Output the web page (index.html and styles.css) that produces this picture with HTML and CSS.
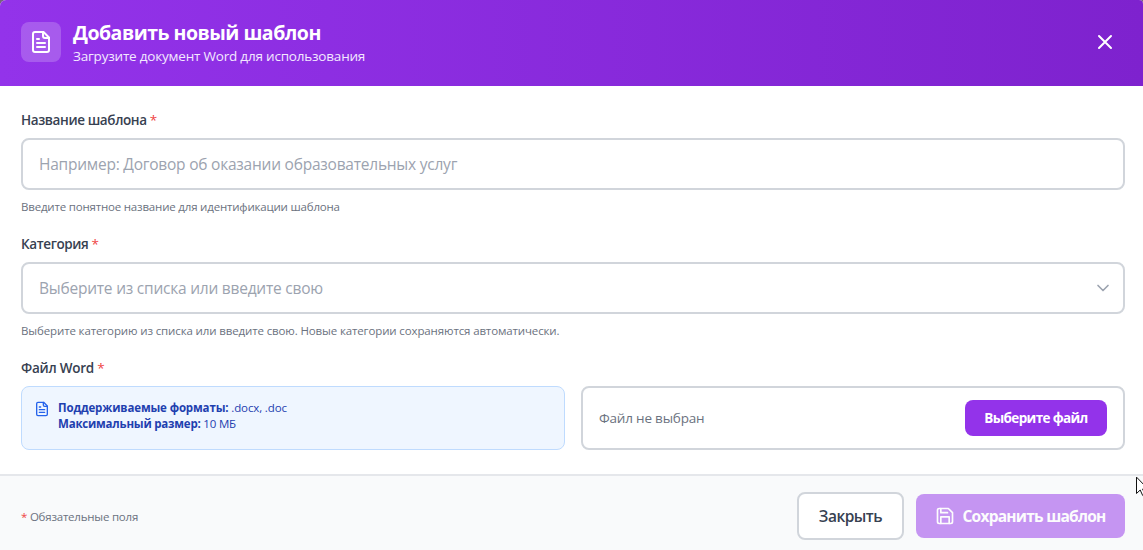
FILE: index.html
```html
<!DOCTYPE html>
<html lang="ru">
<head>
    <meta charset="UTF-8">
    <meta name="viewport" content="width=device-width, initial-scale=1.0">
    <title>Добавить новый шаблон</title>

    <link rel="stylesheet" href="styles.css">
</head>
<body>

<div class="modal">
    <header class="modal-header">
        <div class="header-icon">
            <svg width="24" height="24" viewBox="0 0 24 24">
                <path d="M14.5 2H6a2 2 0 0 0-2 2v16a2 2 0 0 0 2 2h12a2 2 0 0 0 2-2V7.5z"/>
                <path d="M14 2v4a2 2 0 0 0 2 2h4M10 9H8M16 13H8M16 17H8"/>
            </svg>
        </div>
        <div class="header-text">
            <h1>Добавить новый шаблон</h1>
            <p>Загрузите документ Word для использования</p>
        </div>
        <button class="close-icon" type="button" aria-label="Закрыть">
            <svg width="24" height="24" viewBox="0 0 24 24"><path d="M6 18L18 6M6 6l12 12"/></svg>
        </button>
    </header>

    <form class="modal-body">
        <div class="field">
            <label for="name">Название шаблона <span class="required">*</span></label>
            <input id="name" type="text" placeholder="Например: Договор об оказании образовательных услуг">
            <p class="hint">Введите понятное название для идентификации шаблона</p>
        </div>

        <div class="field">
            <label for="category">Категория <span class="required">*</span></label>
            <div class="combo">
                <input id="category" type="text" placeholder="Выберите из списка или введите свою">
                <svg class="chevron" width="20" height="20" viewBox="0 0 24 24"><path d="M6 9l6 6 6-6"/></svg>
            </div>
            <p class="hint hint-category">Выберите категорию из списка или введите свою. Новые категории сохраняются автоматически.</p>
        </div>

        <div class="field">
            <label for="file-btn" class="label-file">Файл Word <span class="required">*</span></label>
            <div class="file-row">
                <div class="info-box">
                    <svg width="16" height="16" viewBox="0 0 24 24">
                        <path d="M14.5 2H6a2 2 0 0 0-2 2v16a2 2 0 0 0 2 2h12a2 2 0 0 0 2-2V7.5z"/>
                        <path d="M14 2v4a2 2 0 0 0 2 2h4M10 9H8M16 13H8M16 17H8"/>
                    </svg>
                    <div class="info-text">
                        <p><strong>Поддерживаемые форматы:</strong> .docx, .doc</p>
                        <p class="max-size"><strong>Максимальный размер:</strong> 10 МБ</p>
                    </div>
                </div>
                <div class="file-picker">
                    <span class="file-name">Файл не выбран</span>
                    <button id="file-btn" class="file-btn" type="button">Выберите файл</button>
                </div>
            </div>
        </div>
    </form>

    <footer class="modal-footer">
        <p class="note"><span class="required">*</span> Обязательные поля</p>
        <button class="btn-close" type="button">Закрыть</button>
        <button class="btn-save" type="button" disabled>
            <svg width="20" height="20" viewBox="0 0 24 24">
                <path d="M16 3H5a2 2 0 0 0-2 2v14a2 2 0 0 0 2 2h14a2 2 0 0 0 2-2V8z"/>
                <path d="M7 3v5h8M7 21v-8h10v8"/>
            </svg>
            <span>Сохранить шаблон</span>
        </button>
    </footer>
</div>

<svg class="cursor" width="12" height="20" viewBox="0 0 12 20">
    <path d="M.5.5v16l3.7-3.5 2.5 5.5 2.3-1-2.4-5.5h5z"/>
</svg>

</body>
</html>
```

FILE: styles.css
```css
* {
    box-sizing: border-box;
    margin: 0;
    padding: 0;
}

body {
    height: 550px;
    overflow: hidden;
    background-color: #75647b;
    font-family: "Open Sans", "Noto Sans", sans-serif;
    color: #374151;
}

button,
input {
    font-family: inherit;
}

svg {
    display: block;
    flex-shrink: 0;
    fill: none;
    stroke: currentColor;
    stroke-width: 2;
    stroke-linecap: round;
    stroke-linejoin: round;
}

.modal {
    display: flex;
    flex-direction: column;
    height: 550px;
    background-color: #fff;
    border-radius: 6px 4px 0 0;
    overflow: hidden;
}

/* Header */
.modal-header {
    display: flex;
    align-items: center;
    gap: 12px;
    height: 86px;
    padding: 18px 18px 20px 21px;
    background: linear-gradient(to right, #9333ea, #7e22ce);
    color: #fff;
}

.header-icon {
    display: flex;
    align-items: center;
    justify-content: center;
    width: 40px;
    height: 40px;
    background-color: rgba(255, 255, 255, 0.2);
    border-radius: 8px;
}

.header-text {
    flex: 1;
}

h1 {
    font-size: 19.5px;
    line-height: 28px;
    font-weight: 700;
    letter-spacing: -0.5px;
    white-space: nowrap;
}

.header-text p {
    font-size: 13.5px;
    line-height: 18px;
    letter-spacing: -0.2px;
    color: #f3e8ff;
}

.close-icon {
    padding: 8px;
    background: none;
    border: none;
    color: #fff;
}

/* Form */
.modal-body {
    display: flex;
    flex-direction: column;
    gap: 20px;
    padding: 24px 18px 24px 21px;
}

.field {
    display: flex;
    flex-direction: column;
    gap: 8px;
}

label {
    height: 20px;
    font-size: 13.5px;
    line-height: 21px;
    font-weight: 600;
    letter-spacing: -0.38px;
}

.label-file {
    letter-spacing: -0.24px;
}

.required {
    color: #ef4444;
}

label .required {
    font-weight: 400;
}

input {
    width: 100%;
    height: 52px;
    padding: 0 16px;
    border: 2px solid #d1d5db;
    border-radius: 8px;
    font-size: 15.5px;
    letter-spacing: -0.23px;
    color: #374151;
}

input::placeholder {
    color: #9ca3af;
}

.combo {
    position: relative;
}

.chevron {
    position: absolute;
    top: 16px;
    right: 12px;
    color: #9ca3af;
}

.hint {
    height: 16px;
    font-size: 11.5px;
    line-height: 18px;
    letter-spacing: -0.19px;
    color: #6b7280;
}

.hint-category {
    letter-spacing: -0.13px;
}

.file-row {
    display: grid;
    grid-template-columns: 1fr 1fr;
    gap: 16px;
    height: 64px;
}

.info-box {
    display: flex;
    gap: 8px;
    padding: 14px 12px 12px;
    background-color: #eff6ff;
    border: 1px solid #bfdbfe;
    border-radius: 8px;
    color: #2563eb;
}

.info-text {
    margin-top: -1px;
    font-size: 11.5px;
    line-height: 16px;
    letter-spacing: -0.13px;
    color: #1e40af;
}

.max-size {
    letter-spacing: -0.2px;
}

.file-picker {
    display: flex;
    align-items: center;
    justify-content: space-between;
    padding: 0 16px;
    border: 2px solid #d1d5db;
    border-radius: 8px;
}

.file-name {
    font-size: 13.5px;
    letter-spacing: -0.2px;
    color: #6b7280;
}

.file-btn {
    width: 142px;
    height: 36px;
    background-color: #9333ea;
    border: none;
    border-radius: 8px;
    color: #fff;
    font-size: 13.5px;
    font-weight: 700;
    letter-spacing: -0.65px;
}

/* Footer */
.modal-footer {
    display: flex;
    flex: 1;
    align-items: center;
    gap: 12px;
    padding: 6px 18px 0 21px;
    background-color: #f9fafb;
    border-top: 2px solid #e5e7eb;
}

.note {
    flex: 1;
    padding-top: 1px;
    font-size: 11.5px;
    letter-spacing: -0.22px;
    color: #6b7280;
}

.btn-close {
    width: 107px;
    height: 48px;
    background-color: #fff;
    border: 2px solid #d1d5db;
    border-radius: 8px;
    color: #374151;
    font-size: 15.5px;
    font-weight: 600;
    letter-spacing: -0.5px;
}

.btn-save {
    display: flex;
    align-items: center;
    justify-content: center;
    gap: 7px;
    width: 209px;
    height: 44px;
    background-color: #9333ea;
    border: none;
    border-radius: 8px;
    color: #fff;
    font-size: 15.5px;
    font-weight: 700;
    letter-spacing: -0.75px;
    white-space: nowrap;
    opacity: 0.5;
}

.cursor {
    position: absolute;
    top: 477px;
    left: 1136px;
    fill: #fff;
    stroke: #111;
    stroke-width: 1;
    stroke-linejoin: miter;
}
```
